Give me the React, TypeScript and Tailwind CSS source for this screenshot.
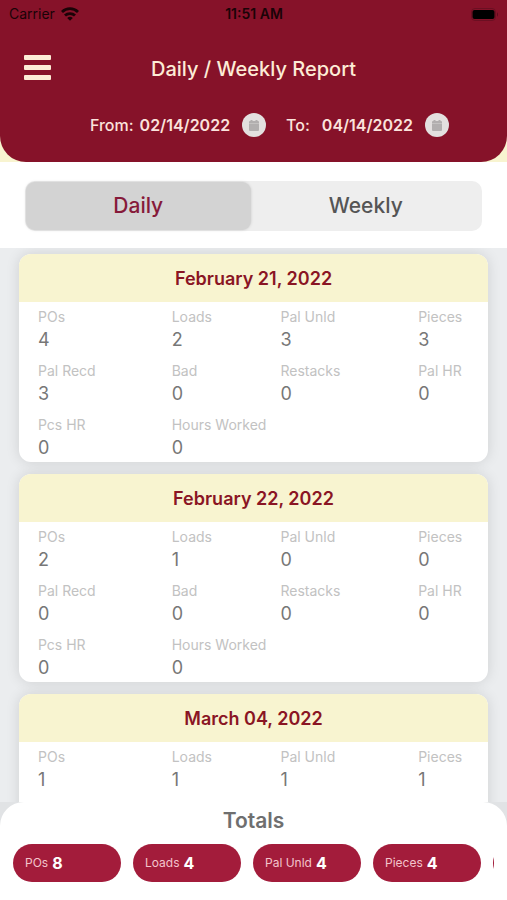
import { useState } from 'react';

type Stat = { label: string; value: number };
type Report = { date: string; values: number[] };

const LABELS = ['POs', 'Loads', 'Pal Unld', 'Pieces', 'Pal Recd', 'Bad', 'Restacks', 'Pal HR', 'Pcs HR', 'Hours Worked'];

const REPORTS: Report[] = [
  { date: 'February 21, 2022', values: [4, 2, 3, 3, 3, 0, 0, 0, 0, 0] },
  { date: 'February 22, 2022', values: [2, 1, 0, 0, 0, 0, 0, 0, 0, 0] },
  { date: 'March 04, 2022', values: [1, 1, 1, 1] },
];

const TOTALS: Stat[] = [
  { label: 'POs', value: 8 },
  { label: 'Loads', value: 4 },
  { label: 'Pal Unld', value: 4 },
  { label: 'Pieces', value: 4 },
];

function WifiIcon() {
  return (
    <svg width="18" height="14" viewBox="0 0 18 14" fill="none" stroke="#1a0307" strokeWidth="2.8" aria-hidden="true">
      <path d="M1 5a11.4 11.4 0 0 1 16 0" />
      <path d="M4 8.6a7.1 7.1 0 0 1 10 0" />
      <path d="M9 13.8 6.2 11a4 4 0 0 1 5.6 0Z" fill="#1a0307" stroke="none" />
    </svg>
  );
}

function BatteryIcon() {
  return (
    <svg width="28" height="13" viewBox="0 0 28 13" aria-hidden="true">
      <rect x="0.5" y="0.5" width="24" height="12" rx="3.5" fill="none" stroke="#6b0f22" />
      <rect x="1.5" y="2" width="22" height="9" rx="2" fill="#000" />
      <path d="M26 4.5c1.3.4 1.3 3.6 0 4Z" fill="#5b0d1d" />
    </svg>
  );
}

function CalendarIcon() {
  return (
    <svg width="10" height="11" viewBox="0 0 10 11" fill="#b2afaf" aria-hidden="true">
      <path d="M1.5 0h2v1h3V0h2v1H9a1 1 0 0 1 1 1v1.2H0V2a1 1 0 0 1 1-1h.5Z" />
      <path d="M0 3.5h10V10a1 1 0 0 1-1 1H1a1 1 0 0 1-1-1Z" />
    </svg>
  );
}

function DateButton({ label }: { label: string }) {
  return (
    <button type="button" aria-label={label} className="flex size-6 items-center justify-center rounded-full bg-[#e3e0df]">
      <CalendarIcon />
    </button>
  );
}

function ReportCard({ date, values }: Report) {
  return (
    <article className="shrink-0 overflow-hidden rounded-xl bg-white shadow-[0_0_14px_rgba(0,0,0,0.12)]">
      <h2 className="bg-[#f8f4d0] pt-px text-center text-lg leading-[47px] font-semibold text-[#8a1524]">{date}</h2>
      <dl className="grid h-40 grid-cols-[134fr_109fr_138fr_70fr] content-start gap-y-2 pt-1 pl-[19px]">
        {values.map((value, i) => (
          <div key={LABELS[i]} className="h-[46px] whitespace-nowrap">
            <dt className="text-sm leading-[22px] text-[#c2c2c2]">{LABELS[i]}</dt>
            <dd className="text-lg leading-6 text-[#777]">{value}</dd>
          </div>
        ))}
      </dl>
    </article>
  );
}

export default function App() {
  const [tab, setTab] = useState('Daily');
  return (
    <div className="flex h-screen flex-col overflow-hidden bg-white font-['Inter','Liberation_Sans',sans-serif]">
      <div className="shrink-0 bg-[#f8f4d0]">
        <header className="rounded-b-[26px] bg-[#861229] pb-[22px]">
          <div className="grid h-7 grid-cols-3 items-center pr-2 pl-[9px] text-sm text-[#1a0307]">
            <span className="flex items-center gap-1.5">
              Carrier <WifiIcon />
            </span>
            <span className="text-center font-semibold">11:51 AM</span>
            <span className="flex justify-end">
              <BatteryIcon />
            </span>
          </div>
          <div className="grid h-[82px] grid-cols-[1fr_auto_1fr] items-center px-6 text-[#fdecd6]">
            <button type="button" aria-label="Open menu" className="mb-1 flex w-[27px] flex-col gap-[5px]">
              <span className="h-[5px] rounded-[1px] bg-[#fdecd6]" />
              <span className="h-[5px] rounded-[1px] bg-[#fdecd6]" />
              <span className="h-[5px] rounded-[1px] bg-[#fdecd6]" />
            </button>
            <h1 className="text-xl font-medium">Daily / Weekly Report</h1>
          </div>
          <div className="flex h-[30px] items-center justify-center gap-5 pl-8 text-base text-[#fbe3dc]">
            <div className="flex items-center gap-3">
              <p className="flex gap-1.5">
                <span className="font-medium">From:</span>
                <time className="font-semibold">02/14/2022</time>
              </p>
              <DateButton label="Choose start date" />
            </div>
            <div className="flex items-center gap-3">
              <p className="flex gap-3">
                <span className="font-medium">To:</span>
                <time className="font-semibold">04/14/2022</time>
              </p>
              <DateButton label="Choose end date" />
            </div>
          </div>
        </header>
      </div>

      <div className="shrink-0 px-[25px] pt-[19px] pb-[17px]">
        <div role="tablist" className="grid h-[50px] grid-cols-[225fr_231fr] rounded-[10px] bg-[#eee] p-px">
          {['Daily', 'Weekly'].map((name) => (
            <button
              key={name}
              type="button"
              role="tab"
              aria-selected={tab === name}
              onClick={() => setTab(name)}
              className={
                tab === name
                  ? 'rounded-[9px] bg-[#d3d3d3] text-[21px] font-medium text-[#861a3a] shadow-[0_0_3px_rgba(0,0,0,0.15)]'
                  : 'rounded-[9px] text-[21px] font-medium text-[#555]'
              }
            >
              {name}
            </button>
          ))}
        </div>
      </div>

      <main className="flex min-h-0 flex-1 flex-col gap-3 overflow-y-auto bg-[#ebedef] px-[19px] pt-1.5 [scrollbar-width:none]">
        {REPORTS.map((report) => (
          <ReportCard key={report.date} {...report} />
        ))}
      </main>

      <div className="shrink-0 bg-[#e1e3e5]">
        <footer className="rounded-t-3xl bg-white px-[13px] pt-1 pb-[18px]">
          <h2 className="text-center text-[21px] leading-[30px] font-semibold text-[#6f6f6f]">Totals</h2>
          <ul className="mt-2 flex gap-3 overflow-x-auto [scrollbar-width:none]">
            {TOTALS.map(({ label, value }) => (
              <li
                key={label}
                className="flex h-[38px] w-[108px] shrink-0 items-center gap-1 rounded-full bg-[#a31c3b] pl-3 text-xs text-[#f3c4cc]"
              >
                {label} <strong className="text-base font-bold text-white">{value}</strong>
              </li>
            ))}
            <li className="h-[38px] w-[108px] shrink-0 rounded-full bg-[#a31c3b]" />
          </ul>
        </footer>
      </div>
    </div>
  );
}
